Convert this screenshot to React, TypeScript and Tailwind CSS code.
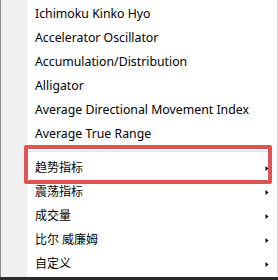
const basic = [
  'Ichimoku Kinko Hyo',
  'Accelerator Oscillator',
  'Accumulation/Distribution',
  'Alligator',
  'Average Directional Movement Index',
  'Average True Range',
]

const groups = ['趋势指标', '震荡指标', '成交量', '比尔 威廉姆', '自定义']

function Arrow() {
  return (
    <svg width="4" height="7" viewBox="0 0 4 7" className="shrink-0">
      <path d="M0.5 1 L3.5 3.5 L0.5 6 Z" fill="#000" />
    </svg>
  )
}

export default function App() {
  return (
    <div
      className="w-[278px] h-[280px] flex flex-col bg-[#2b2b2b] overflow-hidden"
      style={{ fontFamily: '"Noto Sans", "Noto Sans CJK SC", sans-serif' }}
    >
      <div className="relative h-[277px] flex bg-white border-l border-[#8a8a8a] border-r border-r-[#d8d8d8]">
        <div className="w-[26px] bg-[#f0f0f0] shrink-0" />
        <div className="flex-1 flex flex-col pt-[2px] text-[12px] text-black">
          {basic.map((t) => (
            <div key={t} className="h-[24px] flex items-center pl-[8px] pr-[9px] text-[12.3px]">
              {t}
            </div>
          ))}
          <div className="h-[10px] flex items-center">
            <div className="h-px w-full bg-[#e0e0e0] mr-[4px]" />
          </div>
          {groups.map((t) => (
            <div key={t} className="h-[24px] flex items-center justify-between pl-[8px] pr-[8px]">
              <span>{t}</span>
              <Arrow />
            </div>
          ))}
        </div>
        <div className="absolute left-[23px] top-[145px] w-[248px] h-[39px] border-[4px] border-[#e05353] rounded-[2px]" />
      </div>
    </div>
  )
}
